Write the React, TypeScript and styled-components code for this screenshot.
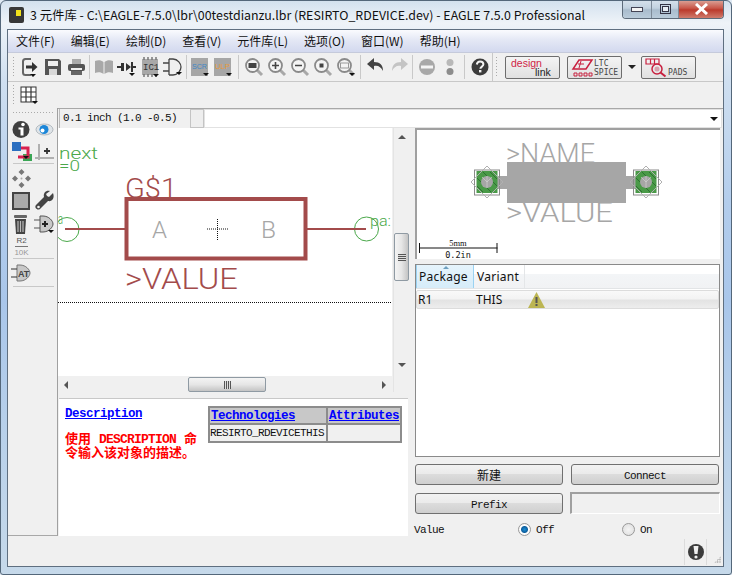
import React from "react";
import styled, { createGlobalStyle } from "styled-components";

const Global = createGlobalStyle`
  html, body { margin: 0; padding: 0; width: 732px; height: 575px; overflow: hidden; background: #dfe9f3; }
  * { box-sizing: border-box; }
`;

const mono = `"Liberation Mono", "DejaVu Sans Mono", monospace`;
const cjk = `"Noto Sans CJK SC", "Noto Sans", sans-serif`;
const EAGLE_RED = "#a34b4b";
const PIN_GREEN = "#4aa84a";
const D = "#a8a8a8";

const Win = styled.div`
  width: 732px; height: 575px; display: flex; flex-direction: column;
  border: 1px solid #54677a; border-radius: 6px 6px 3px 3px; overflow: hidden;
  background: linear-gradient(180deg, #d3e1ee 0, #eef3f8 22px, #cfdff0 80px, #b3cdec 200px, #a9c6ea 300px, #b9d1ea 440px, #c6d9ea 100%);
`;
const TitleBar = styled.div`
  height: 28px; flex: none; display: flex; align-items: flex-start; padding-left: 8px;
`;
const TitleLogo = styled.span`
  width: 15px; height: 16px; margin-top: 6px; background: #383838; border-radius: 2px;
  display: flex; justify-content: center; padding-top: 3px; flex: none;
  &::before { content: ""; width: 5px; height: 6px; background: #f2e21b; margin-left: 3px; }
`;
const TitleText = styled.span`
  margin: 6px 0 0 6px; font: 12.4px/16px ${cjk}; color: #111; white-space: nowrap; flex: none;
`;
const Caption = styled.div`
  margin-left: auto; margin-right: 7px; display: flex; height: 19px; margin-top: -1px; flex: none;
  border: 1px solid #5d6b7a; border-top: none; border-radius: 0 0 4px 4px; overflow: hidden;
`;
const CapBtn = styled.span<{ $w: number; $red?: boolean }>`
  width: ${p => p.$w}px; height: 18px; display: flex; align-items: center; justify-content: center;
  border-left: 1px solid #7e8b99;
  &:first-child { border-left: none; }
  background: ${p => p.$red
    ? "linear-gradient(180deg,#dca79c 0,#c9584a 45%,#bb3a2c 55%,#cf7b6c 100%)"
    : "linear-gradient(180deg,#d7e2ec 0,#c2d2e0 45%,#a9bccd 55%,#b9cbda 100%)"};
`;
const Client = styled.div`
  flex: 1; min-height: 0; margin: 0 7px 7px 6px; background: #f0f0f0; border: 1px solid #5f6f80;
  display: flex; flex-direction: column;
`;
const MenuBar = styled.div`
  height: 23px; flex: none; display: flex; align-items: center; gap: 16px; padding-left: 8px;
  background: linear-gradient(180deg, #fafbfe 0, #e4e8f5 45%, #d3d9ef 100%);
  border-bottom: 1px solid #c5cadb;
`;
const MenuItem = styled.span`font: 12px/16px ${cjk}; color: #111; white-space: nowrap;`;
const Toolbar = styled.div<{ $h: number; $plain?: boolean }>`
  height: ${p => p.$h}px; flex: none; display: flex; align-items: center;
  border-bottom: ${p => (p.$plain ? "none" : "1px solid #c8c8c8")};
`;
const Grip = styled.span<{ $ml?: number; $mr?: number }>`
  width: 3px; height: 22px; flex: none; margin: 0 ${p => p.$mr ?? 3}px 0 ${p => p.$ml ?? 4}px;
  background-image: radial-gradient(circle, #aaa 0.8px, transparent 1px); background-size: 3px 3px;
`;
const Slot = styled.span`
  width: 23px; height: 24px; flex: none; display: flex; align-items: center; justify-content: center;
`;
const Sep = styled.span<{ $m?: number }>`
  width: 1px; height: 24px; flex: none; background: #c9c9c9; margin: 0 ${p => p.$m ?? 2}px;
`;
const SegLine = styled.span`width: 1px; height: 28px; background: #c8c8c8; flex: none; margin-left: 1px;`;
const LogoBtn = styled.span<{ $ml?: number }>`
  width: 55px; height: 23px; flex: none; position: relative; overflow: hidden; margin-left: ${p => p.$ml ?? 0}px;
  border: 1px solid #6d6d6d; border-radius: 2px;
  background: linear-gradient(180deg, #f4f4f4, #e0e0e0);
  display: flex; align-items: center; padding-left: 2px;
`;
const LogoRed = styled.span`
  position: absolute; left: 5px; top: 1px; font: 10.5px/11px "Liberation Sans", sans-serif; color: #cf2445;
`;
const LogoDark = styled.span`
  position: absolute; left: 29px; top: 10px; font: 10.5px/11px "Liberation Sans", sans-serif; color: #222;
`;
const LogoSmall = styled.span<{ $x: number; $y: number }>`
  position: absolute; left: ${p => p.$x}px; top: ${p => p.$y}px;
  font: 8px/8px "DejaVu Sans Mono", monospace; color: #444; white-space: pre;
`;
const ArrowSlot = styled.span`
  width: 19px; flex: none; display: flex; justify-content: center;
  &::before { content: ""; border: 4px solid transparent; border-top: 4px solid #222; border-bottom: none; }
`;

const Main = styled.div`flex: 1; min-height: 0; display: flex;`;
const Side = styled.div`
  width: 50px; flex: none; border-right: 1px solid #a0a0a0; border-bottom: 1px solid #a8a8a8;
  padding: 0 0 0 2px; display: flex; flex-direction: column;
`;
const SideGrip = styled.span`
  display: block; height: 3px; margin: 3px 2px 4px 2px; flex: none;
  background-image: radial-gradient(circle, #aaa 0.8px, transparent 1px); background-size: 3px 3px;
`;
const SideRow = styled.div<{ $h: number }>`height: ${p => p.$h}px; display: flex; align-items: center; flex: none;`;
const SideSep = styled.span`display: block; height: 1px; background: #c8c8c8; margin: 1px 3px 2px 3px; flex: none;`;
const SideLabel = styled.span`
  width: 23px; text-align: center; font: 8px/8px "Liberation Sans", sans-serif; color: #999;
  span { display: block; color: #555; border-bottom: 1px solid #777; width: 13px; margin: 0 auto 2px; padding-bottom: 1px; }
`;

const Work = styled.div`flex: 1; min-width: 0; display: flex; flex-direction: column; border-top: 1px solid #a8a8a8;`;
const CmdRow = styled.div`height: 19px; flex: none; display: flex; margin-right: 1px;`;
const GridLabel = styled.div`
  width: 129px; flex: none; border-left: 1px solid #bbb; padding: 1px 0 0 3px; margin-left: 1px;
  font: 11px/16px ${mono}; letter-spacing: -0.6px; color: #111; white-space: pre;
`;
const SmallBox = styled.span`width: 14px; flex: none; margin-left: 2px; border: 1px solid #c4c4c4; background: #eee;`;
const Combo = styled.div`
  flex: 1; background: #fff; border: 1px solid #e2e2e2; position: relative;
  &::after { content: ""; position: absolute; right: 3px; top: 7px; border: 4px solid transparent; border-top: 4px solid #111; border-bottom: none; }
`;
const Body = styled.div`flex: 1; min-height: 0; display: flex;`;
const LeftCol = styled.div`width: 350px; flex: none; display: flex; flex-direction: column;`;
const ViewRow = styled.div`height: 264px; flex: none; display: flex;`;
const CanvasCol = styled.div`width: 335px; flex: none; display: flex; flex-direction: column;`;
const Canvas = styled.svg`width: 334px; height: 248px; display: block; background: #fff; flex: none;`;
const VBar = styled.div`
  width: 16px; flex: none; display: flex; flex-direction: column; align-items: stretch; background: #f0f0f0;
  border-left: 1px solid #e4e4e4;
`;
const ArrowUp = styled.span`
  flex: none; height: 17px; display: flex; justify-content: center; padding-top: 7px;
  &::before { content: ""; border: 4px solid transparent; border-bottom: 4px solid #555; border-top: none; height: 0; }
`;
const ArrowDown = styled.span`
  flex: none; height: 17px; margin-bottom: 16px; display: flex; justify-content: center; padding-top: 4px;
  &::before { content: ""; border: 4px solid transparent; border-top: 4px solid #555; border-bottom: none; height: 0; }
`;
const VThumb = styled.div`
  height: 48px; flex: none; margin-top: 88px; margin-bottom: auto; border: 1px solid #8f9aa3; border-radius: 2px;
  background: linear-gradient(90deg, #f4f4f4, #e6e6e6 50%, #c4c4c4);
  display: flex; align-items: center; justify-content: center;
  &::before { content: ""; width: 8px; height: 7px; background: repeating-linear-gradient(180deg, #555 0 1px, #ddd 1px 2px); }
`;
const HBar = styled.div`
  height: 15px; margin-left: 2px; flex: none; display: flex; align-items: center; background: #f0f0f0;
  margin-top: 1px;
`;
const ArrowLeft = styled.span`
  flex: none; width: 8px; display: flex; justify-content: flex-end;
  &::before { content: ""; border: 4px solid transparent; border-right: 4px solid #555; border-left: none; }
`;
const ArrowRight = styled.span`
  flex: none; width: 4px; margin-left: auto; margin-right: 7px; display: flex;
  &::before { content: ""; border: 4px solid transparent; border-left: 4px solid #555; border-right: none; }
`;
const HThumb = styled.div`
  width: 78px; height: 15px; flex: none; margin-left: 120px; border: 1px solid #8f9aa3; border-radius: 2px;
  background: linear-gradient(180deg, #f4f4f4, #e6e6e6 50%, #c4c4c4);
  display: flex; align-items: center; justify-content: center;
  &::before { content: ""; width: 7px; height: 8px; background: repeating-linear-gradient(90deg, #555 0 1px, #ddd 1px 2px); }
`;
const DescPanel = styled.div`
  flex: 1; min-height: 0; margin-top: 6px; margin-left: 1px; background: #fff; border-top: 1px solid #c8c8c8;
  display: flex; padding: 7px 6px 0 6px; gap: 9px;
`;
const DescText = styled.div`width: 134px; flex: none;`;
const DescLink = styled.a`
  display: block; font: bold 12.5px/16px "Liberation Mono", monospace; letter-spacing: -0.5px; color: #00f; text-decoration: underline; margin-bottom: 9px;
`;
const DescRed = styled.div`
  font: bold 13px/14px ${cjk}; color: #f00; word-spacing: 5px;
  b { font: bold 13px/0 "Liberation Mono", monospace; letter-spacing: -0.8px; }
`;
const TechTable = styled.table`
  border-collapse: separate; border-spacing: 0; border: 2px solid #8c8c8c; height: 37px; width: 194px; table-layout: fixed; align-self: flex-start;
`;
const TechHead = styled.th<{ $w: number }>`
  width: ${p => p.$w}px; padding: 1px 0 0 1px; text-align: left; background: #c8c8c8; height: 17px;
  font: bold 12.5px/14px "Liberation Mono", monospace; letter-spacing: -0.5px; border-bottom: 2px solid #8c8c8c;
  &:first-child { border-right: 2px solid #8c8c8c; }
  a { color: #00f; text-decoration: underline; }
`;
const TechCell = styled.td`
  padding: 1px 0 0 0; background: #f0f0f0; font: 11px/15px ${mono}; letter-spacing: -0.6px; color: #111; white-space: nowrap;
  &:first-child { border-right: 2px solid #8c8c8c; }
`;

const RightCol = styled.div`
  flex: 1; min-width: 0; display: flex; flex-direction: column; padding-left: 7px;
`;
const Preview = styled.svg`
  width: 305px; height: 131px; display: block; flex: none; background: #fff;
  border-top: 2px solid #a0a0a0; border-left: 2px solid #a0a0a0;
`;
const PartBox = styled.div`
  width: 305px; height: 193px; flex: none; margin-top: 5px; background: #fff; border: 1px solid #8a8a8a; padding: 0;
`;
const HeadRow = styled.div`
  display: flex; height: 24px; background: linear-gradient(180deg,#fff 0,#fff 40%,#f3f5f7 41%,#f1f2f4 100%);
  border-bottom: 1px solid #e2e4e6; margin-bottom: 1px;
`;
const HeadCell = styled.div<{ $w: number; $on?: boolean }>`
  width: ${p => p.$w}px; flex: none; position: relative; font: 12px/24px "Noto Sans", sans-serif; letter-spacing: 0.25px;
  padding-left: ${p => (p.$on ? 2 : 3)}px; color: #111;
  border-right: 1px solid ${p => (p.$on ? "#9ad2f2" : "#e4e6e8")};
  border-left: ${p => (p.$on ? "1px solid #9ad2f2" : "none")};
  background: ${p => (p.$on ? "linear-gradient(180deg,#e6f4fc,#d6ecf9)" : "transparent")};
  &::before {
    content: ""; position: absolute; left: 26px; top: 1px; display: ${p => (p.$on ? "block" : "none")};
    border: 3px solid transparent; border-bottom: 3px solid #6ea0c0; border-top: none;
  }
`;
const DataRow = styled.div`
  display: flex; align-items: center; height: 19px; border: 1px solid #dcdcdc; border-radius: 2px;
  background: linear-gradient(180deg,#f9f9f9 0,#f3f3f3 45%,#e3e3e3 55%,#ededed 100%);
`;
const DataCell = styled.span<{ $w: number }>`
  width: ${p => p.$w}px; flex: none; font: 12px/17px "Noto Sans", sans-serif; color: #111; padding-left: 1px;
`;
const BtnGrid = styled.div`
  display: grid; grid-template-columns: 148px 148px; column-gap: 8px; row-gap: 8px; margin-top: 7px; grid-auto-rows: 21px; width: 305px;
`;
const PushBtn = styled.button<{ $cjk?: boolean }>`
  margin: 0; padding: ${p => (p.$cjk ? "0" : "2px 0 0")}; border: 1px solid #707070; border-radius: 3px; color: #111;
  background: linear-gradient(180deg, #f2f2f2 0, #ebebeb 45%, #dcdcdc 50%, #cfcfcf 100%);
  font: ${p => (p.$cjk ? `12px/18px ${cjk}` : `11px/16px ${mono}`)};
  letter-spacing: ${p => (p.$cjk ? "0" : "-0.6px")};
`;
const PrefixInput = styled.div`
  width: 150px; margin: -1px 0 0 -1px; height: 22px; background: #f0f0f0;
  border: 1px solid #fff; border-top: 2px solid #a0a0a0; border-left: 2px solid #a0a0a0;
`;
const RadioRow = styled.div`display: flex; align-items: center; height: 16px; margin: 7px 0 0 -1px;`;
const RowLabel = styled.span<{ $w?: number }>`
  font: 11px/16px ${mono}; letter-spacing: -0.6px; color: #111; width: ${p => p.$w ?? 0}px; flex: none; white-space: nowrap; padding-top: 2px;
`;
const Radio = styled.span<{ $on?: boolean }>`
  width: 13px; height: 13px; border-radius: 50%; flex: none; margin-right: 5px; border: 1px solid #999;
  background: ${p => (p.$on
    ? "radial-gradient(circle, #1a8fd6 0, #0f5f9e 3px, #fff 4px, #eee 100%)"
    : "radial-gradient(circle, #f4f4f4 0, #dcdcdc 100%)")};
`;
const Status = styled.div`height: 30px; flex: none; display: flex; align-items: center; justify-content: flex-end; position: relative; padding-top: 1px;`;
const StatusCell = styled.span`
  width: 23px; height: 26px; display: flex; align-items: center; justify-content: center; margin-right: 16px;
  border-left: 1px solid #dcdcdc; border-right: 1px solid #dcdcdc;
`;
const SizeGrip = styled.span`
  position: absolute; right: 2px; bottom: 3px; width: 7px; height: 7px;
  background: radial-gradient(circle, #aaa 0.7px, transparent 1px) 0 0/2.4px 2.4px;
  clip-path: polygon(100% 0, 100% 100%, 0 100%);
`;
const Vec = styled.text<{ $c: string; $s: number }>`
  font-family: Roboto, "Liberation Sans", sans-serif; font-weight: 300; font-size: ${p => p.$s}px; fill: ${p => p.$c};
`;

const Drop = ({ x = 14, y = 18 }: { x?: number; y?: number }) => <path d={`M${x} ${y}h6l-3 3z`} fill="#111" />;
const Ic = ({ children, w = 22, h = 22 }: { children: React.ReactNode; w?: number; h?: number }) => (
  <svg width={w} height={h} viewBox={`0 0 ${w} ${h}`}>{children}</svg>
);

const ExitI = () => <Ic>
  <path d="M12 3H6.500C5 3 4 4 4 5.500v11C4 18 5 19 6.500 19H12" fill="none" stroke="#666" strokeWidth="2" />
  <path d="M7 9.500h6V6l5.500 5-5.500 5v-3.500H7z" fill="#333" /><Drop x={11} y={18} /></Ic>;
const SaveI = () => <Ic>
  <path d="M3 3h14l2 2v14H3z" fill="#555" /><rect x="6" y="5" width="10" height="5" fill="#f0f0f0" /><rect x="7" y="13" width="8" height="6" fill="#d8d8d8" /></Ic>;
const PrintI = () => <Ic>
  <rect x="7" y="3" width="9" height="5" fill="#aaa" /><rect x="3" y="8" width="17" height="7" rx="2" fill="#555" /><rect x="6" y="12" width="11" height="2" fill="#eee" /><rect x="6" y="15" width="11" height="4" fill="#666" /></Ic>;
const BookI = () => <Ic>
  <path d="M2 5c3-1 6-1 8.500 1v12C8 16 5 16 2 17z" fill={D} /><path d="M20 5c-3-1-6-1-8.500 1v12c2.500-2 5.500-2 8.500-1z" fill={D} /></Ic>;
const DiodeI = () => <Ic>
  <path d="M1 11h4M17 11h3" stroke="#333" strokeWidth="2" /><path d="M5 7h3v8H5zM10 7l5 4-5 4z" fill="#333" /><rect x="15" y="6" width="2" height="10" fill="#333" /><Drop x={13} y={17} /></Ic>;
const ChipI = () => <Ic>
  <rect x="3" y="3" width="16" height="16" fill={D} />
  <path d="M5 1v3M9 1v3M13 1v3M17 1v3M5 18v3M9 18v3M13 18v3M17 18v3" stroke="#777" strokeWidth="1.500" />
  <text x="4" y="14" fontFamily="Liberation Mono, monospace" fontSize="9" fill="#333">IC1</text><Drop x={14} y={18} /></Ic>;
const GateI = () => <Ic>
  <path d="M7 3h4c5 0 8 5 8 8s-3 8-8 8H7" fill="none" stroke="#444" strokeWidth="1.300" /><path d="M1 7h6M1 15h6M7 3v16" stroke="#444" strokeWidth="1.300" /><Drop x={14} y={16} /></Ic>;
const ScrI = ({ t, c }: { t: string; c: string }) => <Ic>
  <rect x="1" y="2" width="17" height="18" fill="#a6a6a6" />
  <text x="2" y="13" fontFamily="Liberation Sans, sans-serif" fontSize="8" textLength="15" lengthAdjust="spacingAndGlyphs" fill={c}>{t}</text><Drop x={13} y={17} /></Ic>;
const ZoomI = ({ k }: { k: "fit" | "in" | "out" | "sel" | "prev" }) => <Ic>
  <path d="M14 14l5 5" stroke="#a8a8a8" strokeWidth="3" />
  <circle cx="9.500" cy="9.500" r="6.500" fill="#f4f4f4" stroke="#8a8a8a" strokeWidth="1.800" />
  {k === "fit" && <rect x="5.500" y="7" width="8" height="5" fill="#444" />}
  {k === "in" && <path d="M6 9.500h7M9.500 6v7" stroke="#444" strokeWidth="1.600" />}
  {k === "out" && <path d="M6 9.500h7" stroke="#444" strokeWidth="1.600" />}
  {k === "sel" && <rect x="7.500" y="7.500" width="4" height="4" fill="#444" />}
  {k === "prev" && <><rect x="5.500" y="7" width="8" height="5" fill="none" stroke="#999" /><Drop x={14} y={17} /></>}
</Ic>;
const UndoI = ({ c }: { c: string }) => <Ic>
  <path d="M9 6V2L2 8l7 6v-4c4-1 7 1 9 5 0-6-3-9-9-9z" fill={c} /></Ic>;
const RedoI = ({ c }: { c: string }) => <Ic>
  <path d="M13 6V2l7 6-7 6v-4C9 9 6 11 4 15c0-6 3-9 9-9z" fill={c} /></Ic>;
const StopI = () => <Ic><circle cx="11" cy="11" r="8" fill={D} /><rect x="5" y="9.500" width="12" height="3" fill="#f4f4f4" /></Ic>;
const DotsI = () => <Ic><circle cx="11" cy="6.500" r="3.500" fill="#b8b8b8" /><circle cx="11" cy="15.500" r="3.500" fill="#8c8c8c" /></Ic>;
const HelpI = () => <Ic>
  <circle cx="11" cy="11" r="8.500" fill="#3c3c3c" />
  <path d="M7.800 8.500c.3-2 1.600-3 3.300-3 2 0 3.300 1.200 3.300 2.800 0 2.300-3 2.300-3 4.500" fill="none" stroke="#f4f4f4" strokeWidth="2" />
  <rect x="10" y="14" width="2.400" height="2.400" fill="#f4f4f4" /></Ic>;
const GridI = () => <Ic>
  <rect x="2" y="3" width="15" height="15" fill="#fff" stroke="#333" />
  <path d="M7 3v15M12 3v15M2 8h15M2 13h15" stroke="#333" strokeWidth="1.200" /><Drop x={13} y={17} /></Ic>;
const InfoI = () => <Ic w={23} h={23}>
  <circle cx="11" cy="11.500" r="8.500" fill="#3f3f3f" /><circle cx="13" cy="6.500" r="1.800" fill="#fff" /><path d="M13.500 9.500v8h-3v-6h-2v-2z" fill="#fff" /></Ic>;
const EyeI = () => <Ic w={23} h={23}>
  <ellipse cx="11.500" cy="11.500" rx="8.500" ry="5.500" fill="#dfe4e8" stroke="#b0b8be" /><circle cx="11" cy="11.500" r="4.500" fill="#1b86d8" /><circle cx="9.500" cy="12.500" r="2" fill="#fff" /></Ic>;
const LayerI = () => <Ic w={23} h={23}>
  <rect x="13" y="14" width="9" height="7" fill="#3aa655" /><path d="M8 8h10v9h-10" fill="none" stroke="#d8214f" strokeWidth="3" />
  <rect x="2" y="2" width="9" height="9" fill="#2b6fc0" /><Drop x={13} y={16} /></Ic>;
const MarkI = () => <Ic w={23} h={23}>
  <path d="M6 4v16M2 18h19" stroke="#b0b0b0" strokeWidth="2" /><path d="M11 11h6M14 8v6" stroke="#333" strokeWidth="1.800" /></Ic>;
const MoveI = () => <Ic w={23} h={23}>
  <path d="M11.500 2l3 3-3 3-3-3zM11.500 15l3 3-3 3-3-3zM5 8.500l3 3-3 3-3-3zM18 8.500l3 3-3 3-3-3z" fill="#777" />
  <circle cx="11.500" cy="11.500" r="1" fill="#aaa" /></Ic>;
const SquareI = () => <Ic w={23} h={23}><rect x="3" y="3" width="16" height="16" fill="#aaa" stroke="#444" strokeWidth="2" /></Ic>;
const WrenchI = () => <Ic w={23} h={23}>
  <path d="M20 3l-4 4-2-1-1-2 4-3c-4-1-7 2-6 6L3 15c-2 2 1 6 4 4l8-8c4 1 7-3 5-8z" fill="#444" /><circle cx="5.500" cy="17" r="1.300" fill="#f0f0f0" /></Ic>;
const TrashI = () => <Ic w={23} h={23}>
  <rect x="4" y="2" width="13" height="3" rx="1" fill="#666" /><path d="M5 6h11l-1 15H6z" fill="#444" /><path d="M8 8v11M10.500 8v11M13 8v11" stroke="#bbb" strokeWidth="1.200" /></Ic>;
const GatePlusI = () => <Ic w={23} h={23}>
  <path d="M7 3h3c6 0 10 5 10 8s-4 8-10 8H7z" fill="#c8c8c8" stroke="#555" /><path d="M1 7h6M1 15h6" stroke="#555" /><path d="M9 11h6M12 8v6" stroke="#222" strokeWidth="2" /><Drop x={15} y={17} /></Ic>;
const AtI = () => <Ic w={23} h={23}>
  <path d="M7 3h3c6 0 10 5 10 8s-4 8-10 8H7z" fill="#c8c8c8" stroke="#777" /><path d="M1 7h6M1 15h6" stroke="#333" />
  <text x="8" y="15" fontFamily="Liberation Sans, sans-serif" fontSize="9" fontWeight="bold" fill="#444">AT</text></Ic>;
const WarnI = () => <svg width="17" height="16" viewBox="0 0 17 16"><path d="M8.500 0L17 16H0z" fill="#bcb552" /><rect x="7.500" y="5" width="2" height="6" fill="#555" /><rect x="7.500" y="12" width="2" height="2" fill="#555" /></svg>;
const BangI = () => <svg width="18" height="18" viewBox="0 0 18 18"><circle cx="9" cy="9" r="8" fill="#3c3c3c" /><path d="M6.500 3h5l-1 8h-3z" fill="#f0f0f0" /><circle cx="9" cy="14" r="1.600" fill="#f0f0f0" /></svg>;

const Pad = ({ cx }: { cx: number }) => (
  <g>
    <rect x={cx - 10.500} y={171} width={21} height={22} fill="#4a9a48" />
    <rect x={cx - 12.500} y={170} width={25} height={25} fill="none" stroke="#8a8a8a" />
    <path d={`M${cx - 10} 178l14 14M${cx - 4} 172l14 14M${cx - 10} 186l6 6M${cx + 3} 172l7 7`} stroke="#23602a" strokeWidth="0.700" />
    <path d={`M${cx} 166l16 16-16 16-16-16z`} fill="none" stroke="#b0b0b0" />
    <circle cx={cx} cy={182} r={6} fill="#a6a6a6" />
    <path d={`M${cx} 176v12M${cx - 5} 177l5 5 5-5`} fill="none" stroke="#d8d8d8" strokeWidth="0.600" />
  </g>
);

const groups = ["文件(F)", "编辑(E)", "绘制(D)", "查看(V)", "元件库(L)", "选项(O)", "窗口(W)", "帮助(H)"];

export default function App() {
  return (
    <Win>
      <Global />
      <TitleBar>
        <TitleLogo />
        <TitleText>3 元件库 - C:\EAGLE-7.5.0\lbr\00testdianzu.lbr (RESIRTO_RDEVICE.dev) - EAGLE 7.5.0 Professional</TitleText>
        <Caption>
          <CapBtn $w={28}><svg width="12" height="5"><rect x=".5" y=".5" width="11" height="4" fill="#f4f4f4" stroke="#445" /></svg></CapBtn>
          <CapBtn $w={27}><svg width="11" height="10"><rect x=".5" y=".5" width="10" height="9" fill="none" stroke="#334" /><rect x="2.500" y="2.500" width="6" height="5" fill="#e8eef4" stroke="#334" /></svg></CapBtn>
          <CapBtn $w={45} $red><svg width="15" height="12" viewBox="0 0 15 12"><path d="M2 1l11 10M13 1L2 11" stroke="#fff" strokeWidth="3" /></svg></CapBtn>
        </Caption>
      </TitleBar>
      <Client>
        <MenuBar>{groups.map(g => <MenuItem key={g}>{g}</MenuItem>)}</MenuBar>
        <Toolbar $h={29}>
          <Grip />
          <Slot><ExitI /></Slot><Slot><SaveI /></Slot><Slot><PrintI /></Slot>
          <Sep />
          <Slot><BookI /></Slot><Slot><DiodeI /></Slot><Slot><ChipI /></Slot><Slot><GateI /></Slot>
          <Sep />
          <Slot><ScrI t="SCR" c="#3d86c6" /></Slot><Slot><ScrI t="ULP" c="#e89a3a" /></Slot>
          <Sep $m={3} />
          <Slot><ZoomI k="fit" /></Slot><Slot><ZoomI k="in" /></Slot><Slot><ZoomI k="out" /></Slot><Slot><ZoomI k="sel" /></Slot><Slot><ZoomI k="prev" /></Slot>
          <Sep $m={3} />
          <Slot><UndoI c="#444" /></Slot><Slot><RedoI c="#c4c4c4" /></Slot>
          <Sep />
          <Slot><StopI /></Slot><Slot><DotsI /></Slot>
          <Sep $m={3} />
          <Slot><HelpI /></Slot>
          <SegLine />
          <Grip $ml={2} $mr={7} />
          <LogoBtn><LogoRed>design</LogoRed><LogoDark>link</LogoDark></LogoBtn>
          <LogoBtn $ml={7}>
            <svg width="24" height="21" viewBox="0 0 24 21">
              <path d="M9 3h13l-6 9H3z" fill="none" stroke="#c8203f" strokeWidth="1.500" />
              <path d="M8 7h6M11 4l-2 7" stroke="#c8203f" />
              <path d="M4 16h3v3H4zM9 16h3v3H9zM14 16h3v3h-3zM19 16h3v3h-3z" fill="none" stroke="#c8203f" />
            </svg>
            <LogoSmall $x={26} $y={3}>LTC</LogoSmall>
            <LogoSmall $x={26} $y={12}>SPICE</LogoSmall>
          </LogoBtn>
          <ArrowSlot />
          <LogoBtn>
            <svg width="24" height="21" viewBox="0 0 24 21">
              <path d="M2 2h13v5H2zM6.500 2v5M10.500 2v5" fill="none" stroke="#c8203f" strokeWidth="1.200" />
              <circle cx="13" cy="12" r="5" fill="none" stroke="#c8203f" strokeWidth="1.500" />
              <circle cx="13" cy="12" r="2.500" fill="#d8a0ac" />
              <path d="M16.500 15.500l5 4" stroke="#c8203f" strokeWidth="2" />
            </svg>
            <LogoSmall $x={26} $y={12}>PADS</LogoSmall>
          </LogoBtn>
        </Toolbar>
        <Toolbar $h={26} $plain>
          <Grip />
          <Slot><GridI /></Slot>
        </Toolbar>
        <Main>
          <Side>
            <SideGrip />
            <SideRow $h={22}><Slot><InfoI /></Slot><Slot><EyeI /></Slot></SideRow>
            <SideRow $h={22}><Slot><LayerI /></Slot><Slot><MarkI /></Slot></SideRow>
            <SideSep />
            <SideRow $h={24}><Slot><MoveI /></Slot></SideRow>
            <SideRow $h={23}><Slot><SquareI /></Slot><Slot><WrenchI /></Slot></SideRow>
            <SideRow $h={23}><Slot><TrashI /></Slot><Slot><GatePlusI /></Slot></SideRow>
            <SideRow $h={21}><SideLabel><span>R2</span>10K</SideLabel></SideRow>
            <SideSep />
            <SideRow $h={24}><Slot><AtI /></Slot></SideRow>
            <SideSep />
          </Side>
          <Work>
            <CmdRow>
              <GridLabel>0.1 inch (1.0 -0.5)</GridLabel>
              <SmallBox />
              <Combo />
            </CmdRow>
            <Body>
              <LeftCol>
                <ViewRow>
                  <CanvasCol>
                    <Canvas viewBox="58 128 334 248">
                      <Vec $c={PIN_GREEN} $s={17} x="59" y="159" textLength="39" lengthAdjust="spacingAndGlyphs">next</Vec>
                      <Vec $c={PIN_GREEN} $s={15} x="59" y="171" textLength="21" lengthAdjust="spacingAndGlyphs">=0</Vec>
                      <circle cx="67" cy="229.500" r="12" fill="none" stroke={PIN_GREEN} />
                      <circle cx="366.500" cy="229" r="12" fill="none" stroke={PIN_GREEN} />
                      <Vec $c={PIN_GREEN} $s={14} x="58" y="224" textLength="5" lengthAdjust="spacingAndGlyphs">a</Vec>
                      <Vec $c={PIN_GREEN} $s={15} x="370" y="226" textLength="21" lengthAdjust="spacingAndGlyphs">pa:</Vec>
                      <path d="M65 229h60M307 229h59" stroke={EAGLE_RED} strokeWidth="2" />
                      <rect x="126.500" y="199" width="179" height="59.500" fill="none" stroke={EAGLE_RED} strokeWidth="4" />
                      <Vec $c={EAGLE_RED} $s={28} x="125" y="198" textLength="52" lengthAdjust="spacingAndGlyphs">G$1</Vec>
                      <Vec $c="#a6a6a6" $s={23} x="152" y="238" textLength="15" lengthAdjust="spacingAndGlyphs">A</Vec>
                      <Vec $c="#a6a6a6" $s={23} x="261" y="238" textLength="15" lengthAdjust="spacingAndGlyphs">B</Vec>
                      <path d="M207 229h21M217.500 219v21" stroke="#111" strokeDasharray="1 1" />
                      <Vec $c={EAGLE_RED} $s={29.500} x="125" y="289" textLength="113" lengthAdjust="spacingAndGlyphs">&gt;VALUE</Vec>
                      <path d="M58 302.500h333" stroke="#111" strokeDasharray="1 1" />
                    </Canvas>
                    <HBar>
                      <ArrowLeft />
                      <HThumb />
                      <ArrowRight />
                    </HBar>
                  </CanvasCol>
                  <VBar><ArrowUp /><VThumb /><ArrowDown /></VBar>
                </ViewRow>
                <DescPanel>
                  <DescText>
                    <DescLink>Description</DescLink>
                    <DescRed>使用 <b>DESCRIPTION</b> 命令输入该对象的描述。</DescRed>
                  </DescText>
                  <TechTable>
                    <thead>
                      <tr>
                        <TechHead $w={118}><a>Technologies</a></TechHead>
                        <TechHead $w={72}><a>Attributes</a></TechHead>
                      </tr>
                    </thead>
                    <tbody>
                      <tr><TechCell>RESIRTO_RDEVICETHIS</TechCell><TechCell /></tr>
                    </tbody>
                  </TechTable>
                </DescPanel>
              </LeftCol>
              <RightCol>
                <Preview viewBox="417 130 303 129">
                  <Vec $c="#a6a6a6" $s={27} x="506" y="163" textLength="89" lengthAdjust="spacingAndGlyphs">&gt;NAME</Vec>
                  <Vec $c="#a6a6a6" $s={27} x="506" y="222" textLength="107" lengthAdjust="spacingAndGlyphs">&gt;VALUE</Vec>
                  <rect x="495" y="176" width="145" height="13" fill="#a6a6a6" />
                  <rect x="507" y="162" width="119" height="41" fill="#a6a6a6" />
                  <Pad cx={487} />
                  <Pad cx={646} />
                  <path d="M419.500 243v10M419.500 248h78M497 243v10" stroke="#111" fill="none" />
                  <text x="458" y="246" textAnchor="middle" fontFamily="Liberation Serif, serif" fontSize="8.500" fill="#111">5mm</text>
                  <text x="458" y="258" textAnchor="middle" fontFamily="DejaVu Sans Mono, monospace" fontSize="8.500" fill="#111">0.2in</text>
                </Preview>
                <PartBox>
                  <HeadRow>
                    <HeadCell $w={58} $on>Package</HeadCell>
                    <HeadCell $w={51}>Variant</HeadCell>
                  </HeadRow>
                  <DataRow>
                    <DataCell $w={58}>R1</DataCell>
                    <DataCell $w={53}>THIS</DataCell>
                    <WarnI />
                  </DataRow>
                </PartBox>
                <BtnGrid>
                  <PushBtn $cjk>新建</PushBtn>
                  <PushBtn>Connect</PushBtn>
                  <PushBtn>Prefix</PushBtn>
                  <PrefixInput />
                </BtnGrid>
                <RadioRow>
                  <RowLabel $w={104}>Value</RowLabel>
                  <Radio $on />
                  <RowLabel $w={86}>Off</RowLabel>
                  <Radio />
                  <RowLabel>On</RowLabel>
                </RadioRow>
              </RightCol>
            </Body>
          </Work>
        </Main>
        <Status>
          <StatusCell><BangI /></StatusCell>
          <SizeGrip />
        </Status>
      </Client>
    </Win>
  );
}
